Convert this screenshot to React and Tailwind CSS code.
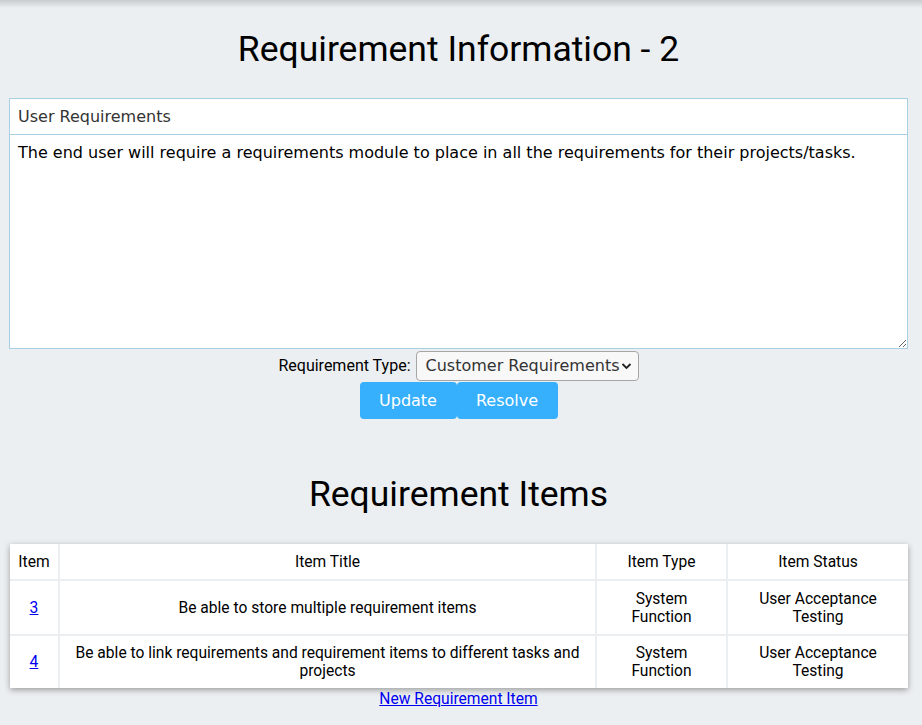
export default function App() {
  const items = [
    { id: 3, title: "Be able to store multiple requirement items", type: "System Function", status: "User Acceptance Testing" },
    { id: 4, title: "Be able to link requirements and requirement items to different tasks and projects", type: "System Function", status: "User Acceptance Testing" },
  ];

  return (
    <div className="min-h-[725px] bg-[#eceff1] font-['Roboto',sans-serif] text-black pr-[5px]">
      {/* top shadow */}
      <div className="h-[8px] -mr-[5px] bg-gradient-to-b from-[#c9cccf] to-[#eceff1]"></div>

      <h1 className="text-center text-[35.5px] leading-[42px] mt-[20px] mb-[28px]">Requirement Information - 2</h1>

      <div className="ml-[9px] mr-[9px]">
        <input
          readOnly
          value="User Requirements"
          className="block w-full h-[37px] px-[8px] bg-white border border-[#a9cfe2] font-['DejaVu_Sans',sans-serif] text-[16px] text-[#333] outline-none"
        />
        <textarea
          readOnly
          value="The end user will require a requirements module to place in all the requirements for their projects/tasks."
          className="block w-full h-[214px] px-[8px] py-[8px] bg-white border border-t-0 border-[#a9cfe2] font-['DejaVu_Sans',sans-serif] text-[16px] leading-[20px] text-black outline-none resize-y"
        />
      </div>

      <div className="flex justify-center items-center gap-[5px] mt-[2px] text-[16px]">
        <span>Requirement Type:</span>
        <div className="flex items-center h-[30px] pl-[9px] pr-[6px] bg-[#f8f8f8] border border-[#a6a6a6] rounded-[4px] font-['DejaVu_Sans',sans-serif] text-[16px] text-[#333]">
          Customer Requirements
          <svg width="11" height="8" viewBox="0 0 11 8" className="ml-[1px]">
            <path d="M1.5 2 L5.5 6 L9.5 2" fill="none" stroke="#222" strokeWidth="1.8" />
          </svg>
        </div>
      </div>

      <div className="flex justify-center mt-[1px]">
        <button className="w-[97px] h-[37px] bg-[#36b0fd] text-white rounded-[4px] font-['DejaVu_Sans',sans-serif] text-[16px]">Update</button>
        <button className="w-[101px] h-[37px] bg-[#36b0fd] text-white rounded-[4px] font-['DejaVu_Sans',sans-serif] text-[16px]">Resolve</button>
      </div>

      <h2 className="text-center text-[35.5px] leading-[42px] mt-[54px] mb-[29px]">Requirement Items</h2>

      <div className="ml-[10px] mr-[9px] shadow-[0_2px_6px_rgba(0,0,0,0.35)] bg-white">
        <table className="w-full table-fixed border-collapse text-[15.6px] leading-[18px] bg-white">
          <thead>
            <tr className="h-[36px]">
              <th className="font-normal w-[49px] border-r-2 border-b-2 border-[#eceff1]">Item</th>
              <th className="font-normal border-x-2 border-b-2 border-[#eceff1]">Item Title</th>
              <th className="font-normal w-[131px] border-x-2 border-b-2 border-[#eceff1]">Item Type</th>
              <th className="font-normal w-[181px] border-l-2 border-b-2 border-[#eceff1]">Item Status</th>
            </tr>
          </thead>
          <tbody>
            {items.map((it, i) => (
              <tr key={it.id} className={i === 0 ? "h-[55px]" : "h-[53px]"}>
                <td className={i === 0 ? "text-center border-r-2 border-y-2 border-[#eceff1]" : "text-center border-r-2 border-t-2 border-[#eceff1]"}>
                  <a href="#" className="text-[#0000ee] underline">{it.id}</a>
                </td>
                <td className={i === 0 ? "text-center px-[4px] border-x-2 border-y-2 border-[#eceff1]" : "text-center px-[4px] border-x-2 border-t-2 border-[#eceff1]"}>{it.title}</td>
                <td className={i === 0 ? "text-center px-[30px] border-x-2 border-y-2 border-[#eceff1]" : "text-center px-[30px] border-x-2 border-t-2 border-[#eceff1]"}>{it.type}</td>
                <td className={i === 0 ? "text-center px-[20px] border-l-2 border-y-2 border-[#eceff1]" : "text-center px-[20px] border-l-2 border-t-2 border-[#eceff1]"}>{it.status}</td>
              </tr>
            ))}
          </tbody>
        </table>
      </div>

      <div className="text-center mt-0 text-[15.6px]">
        <a href="#" className="text-[#0000ee] underline">New Requirement Item</a>
      </div>
    </div>
  );
}
